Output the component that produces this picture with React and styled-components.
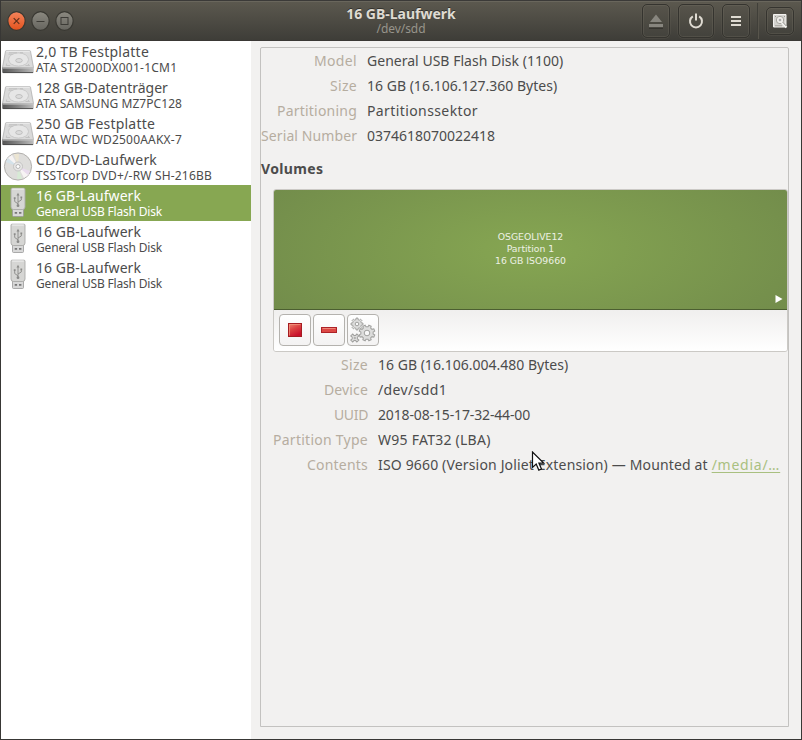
import React from "react";
import styled, { createGlobalStyle, css } from "styled-components";

const GlobalStyle = createGlobalStyle`
  * { box-sizing: border-box; }
  body { margin: 0; font-family: "Noto Sans", "Open Sans", sans-serif; color: #4c4c4c; }
`;

const Window = styled.div`
  position: relative;
  display: flex;
  flex-direction: column;
  width: 802px;
  height: 740px;
  overflow: hidden;
  background: #f2f1f0;
  border: solid #383735;
  border-width: 0 1px 1px;
`;

const HeaderBar = styled.header`
  display: grid;
  grid-template-columns: 1fr auto 1fr;
  align-items: center;
  height: 41px;
  flex: none;
  background: linear-gradient(#5c594f, #3e3d38);
  border-top: 1px solid #3b3a38;
  border-bottom: 1px solid #3a3835;
  box-shadow: inset 0 1px #69665c;
`;

const WindowControls = styled.div`
  display: flex;
  gap: 5px;
  padding: 1px 0 0 6px;
`;

const ControlSvg = styled.svg`
  display: block;
  width: 19px;
  height: 20px;
`;

const Titles = styled.div`
  display: flex;
  flex-direction: column;
  align-items: center;
`;

const Title = styled.div`
  font-size: 14px;
  font-weight: 700;
  line-height: 17px;
  color: #dfdbd2;
  text-shadow: 0 -1px #33322e;
  white-space: nowrap;
`;

const Subtitle = styled.div`
  font-size: 12px;
  line-height: 14px;
  color: #97948b;
  letter-spacing: -0.05px;
`;

const HeaderActions = styled.div`
  display: flex;
  justify-content: flex-end;
  align-items: center;
  padding: 1px 7px 0 0;
`;

const HeaderButton = styled.button`
  display: flex;
  align-items: center;
  justify-content: center;
  width: ${(p) => p.$w}px;
  height: ${(p) => p.$h || 34}px;
  margin-left: ${(p) => p.$gap || 0}px;
  padding: 0;
  border: 1px solid #35342f;
  border-radius: 5px;
  background: linear-gradient(#57544b, #43423c);
  box-shadow: inset 0 0 0 1px rgba(130, 126, 112, 0.22), 0 0 0 0.5px rgba(110, 106, 95, 0.4);
`;

const HeaderDivider = styled.div`
  width: 2px;
  height: 36px;
  margin-left: 7px;
  background: #403f39;
  border-right: 1px solid #58554c;
`;

const Body = styled.main`
  display: flex;
  flex: 1;
  min-height: 0;
`;

const Sidebar = styled.nav`
  width: 250px;
  flex: none;
  background: #fff;
`;

const DriveRow = styled.div`
  display: flex;
  height: 36px;
  padding-left: 1px;
  align-items: center;
  ${(p) => p.$selected && css`
    background: #87a752;
    color: #fff;
  `}
`;

const DriveIcon = styled.svg`
  display: block;
  width: 32px;
  height: 32px;
  flex: none;
`;

const DriveTexts = styled.div`
  padding: 0 0 1px 2px;
  white-space: nowrap;
`;

const DriveName = styled.div`
  font-size: 14px;
  line-height: 18px;
  letter-spacing: ${(p) => p.$track || 0}px;
`;

const DriveModel = styled.div`
  font-size: 12px;
  line-height: 14px;
  letter-spacing: ${(p) => p.$track || 0}px;
`;

const DetailFrame = styled.section`
  width: 529px;
  height: 680px;
  margin: 6px 0 0 9px;
  border: 1px solid #c3c2c0;
  border-radius: 2px 2px 0 0;
`;

const PropertyGrid = styled.dl`
  display: grid;
  grid-template-columns: ${(p) => p.$label}px 1fr;
  column-gap: 10px;
  grid-auto-rows: 25px;
  margin: 0 0 0 ${(p) => p.$indent || 0}px;
  font-size: 14px;
  line-height: 25px;
  white-space: nowrap;
`;

const PropertyLabel = styled.dt`
  color: #b6ada0;
  text-align: right;
  letter-spacing: ${(p) => p.$track || 0}px;
`;

const PropertyValue = styled.dd`
  margin: 0;
  letter-spacing: ${(p) => p.$track || 0}px;
`;

const MountLink = styled.a`
  color: #a9c080;
  letter-spacing: 0.75px;
  text-decoration: underline;
  text-underline-offset: 2px;
`;

const SectionTitle = styled.h2`
  margin: 0;
  height: 41px;
  font-size: 14px;
  line-height: 41px;
  letter-spacing: 0.35px;
`;

const VolumePanel = styled.div`
  width: 515px;
  height: 163px;
  margin-left: 12px;
  border: 1px solid #cbc9c5;
  border-radius: 3px;
  overflow: hidden;
`;

const VolumeMap = styled.div`
  display: grid;
  place-items: center;
  position: relative;
  height: 120px;
  padding-bottom: 2px;
  border-bottom: 1px solid #4c5f31;
  background: radial-gradient(ellipse 60% 100% at 50% 50%, #86a652, #728c4b);
  color: #edf1e4;
  font: 9.3px/12px "DejaVu Sans", sans-serif;
  text-align: center;
`;

const ActiveMark = styled.svg`
  position: absolute;
  right: 4px;
  bottom: 5px;
  width: 8px;
  height: 10px;
`;

const VolumeToolbar = styled.div`
  display: flex;
  gap: 2px;
  height: 41px;
  padding: 4px 5px;
  background: linear-gradient(#f0efee, #fff);
`;

const ToolButton = styled.button`
  display: flex;
  align-items: center;
  justify-content: center;
  width: 32px;
  height: 32px;
  padding: 0;
  border: 1px solid #b4b2ae;
  border-radius: 4px;
  background: linear-gradient(#fff, #f3f2f2);
`;

const Pointer = styled.svg`
  position: absolute;
  left: 530px;
  top: 451px;
  width: 14px;
  height: 21px;
`;

function Control({ kind }) {
  const close = kind === "close";
  return (
    <ControlSvg viewBox="0 0 19 20">
      <defs>
        <linearGradient id={"ctl-" + kind} x1="0" y1="0" x2="0" y2="1">
          <stop offset="0" stopColor={close ? "#f4845c" : "#8b8980"} />
          <stop offset="1" stopColor={close ? "#e2521d" : "#66655f"} />
        </linearGradient>
      </defs>
      <ellipse cx="9.5" cy="10" rx="8.7" ry="9.3" fill={`url(#ctl-${kind})`} stroke="#393832" strokeWidth="1.2" />
      <g fill="none" stroke={close ? "#61301b" : "#3c3b36"}>
        {close && <path d="M6.7 7.2l5.6 5.6M12.3 7.2L6.7 12.8" strokeWidth="1.2" />}
        {kind === "min" && <path d="M5.5 10.5h8" />}
        {kind === "max" && <rect x="6" y="6.5" width="7" height="7" />}
      </g>
    </ControlSvg>
  );
}

function HardDisk() {
  return (
    <DriveIcon viewBox="0 0 32 32">
      <defs>
        <linearGradient id="disk-side" x1="0" y1="0" x2="1" y2="0">
          <stop offset="0" stopColor="#555" />
          <stop offset="0.5" stopColor="#858585" />
          <stop offset="1" stopColor="#bdbdbd" />
        </linearGradient>
      </defs>
      <path d="M4.500 7.500h23q.8 0 1 .8L31.500 24.500H.5L3.500 8.300q.2-.8 1-.8z" fill="#dadada" stroke="#b0b0b0" strokeWidth=".8" />
      <path d="M.3 24.500h31.400v4.700q0 .8-.8.8H1.100q-.8 0-.8-.8z" fill="url(#disk-side)" />
      <path d="M.8 25h30.400" stroke="#c9c9c9" />
      <path d="M1 29.600h30" stroke="#484848" strokeWidth=".9" />
      <ellipse cx="16.500" cy="16.500" rx="10" ry="6.600" fill="#e6e6e6" stroke="#c2c2c2" strokeWidth=".8" />
      <ellipse cx="17" cy="17.500" rx="3.300" ry="2" fill="#dcdcdc" stroke="#b2b2b2" strokeWidth=".7" />
      <path d="M7 9.700h8M6.500 11.200h4M18 9.700h3M4.700 20.500l-.5 2h4M26 21l1.500 1.500h-4" stroke="#bbb" fill="none" strokeWidth=".8" />
      <path d="M4.500 8.200h23" stroke="#efefef" />
    </DriveIcon>
  );
}

function OpticalDisc() {
  return (
    <DriveIcon viewBox="0 0 32 32">
      <circle cx="16" cy="15.5" r="13.6" fill="#dedddb" stroke="#aaa8a5" strokeWidth=".9" />
      <path d="M16 15.5L5 8A13 13 0 0 1 10 4zM16 15.5l11 7.5a13 13 0 0 1-5 4z" fill="#f7f4f4" />
      <path d="M16 15.5L4 11l2-4z" fill="#d4e2ea" />
      <path d="M16 15.5l12 4.5-2 4z" fill="#e9dced" />
      <path d="M16 15.5L12 3h5z" fill="#ece5d2" />
      <path d="M16 15.5l4 12.5h-5z" fill="#d7ead5" />
      <circle cx="16" cy="15.5" r="4.5" fill="#e8e7e6" stroke="#bbb" strokeWidth=".8" />
      <circle cx="16" cy="15.5" r="2" fill="#fff" stroke="#aaa" strokeWidth=".8" />
    </DriveIcon>
  );
}

function UsbStick() {
  return (
    <DriveIcon viewBox="0 0 32 32">
      <path d="M10.500 22h11v6.500q0 1-1 1h-9q-1 0-1-1z" fill="#d8d8d8" stroke="#999" strokeWidth=".8" />
      <path d="M12.700 24.900h2.400v1.800h-2.400zM17 24.900h2.400v1.800H17z" fill="#777" />
      <path d="M10 1.200h12q1 0 1 1V20q0 2.500-2.500 2.500h-9Q9 22.500 9 20V2.200q0-1 1-1z" fill="#d6d6d4" stroke="#aaaaa8" strokeWidth=".9" />
      <path d="M10.200 2h11.600" stroke="#f4f4f4" />
      <g fill="none" stroke="#8a8a88" strokeWidth=".9">
        <path d="M16 8v11M16 16.800l-3.300-2.300v-2.500M16 15l3.300-2v-2.300" />
      </g>
      <path d="M16 5.700l1.500 2.700h-3zM11.800 10.300h1.800v1.800h-1.800zM18.400 9.500h1.800v1.800h-1.800z" fill="#8a8a88" />
      <circle cx="16" cy="18.700" r="1.400" fill="#8a8a88" />
    </DriveIcon>
  );
}

const icons = { disk: HardDisk, disc: OpticalDisc, usb: UsbStick };

const drives = [
  { icon: "disk", name: "2,0 TB Festplatte", nt: 0.24, model: "ATA ST2000DX001-1CM1", mt: 0.25 },
  { icon: "disk", name: "128 GB-Datenträger", nt: 0, model: "ATA SAMSUNG MZ7PC128", mt: 0.05 },
  { icon: "disk", name: "250 GB Festplatte", nt: 0.2, model: "ATA WDC WD2500AAKX-7", mt: 0.2 },
  { icon: "disc", name: "CD/DVD-Laufwerk", nt: 0.18, model: "TSSTcorp DVD+/-RW SH-216BB", mt: 0.18 },
  { icon: "usb", name: "16 GB-Laufwerk", nt: 0.05, model: "General USB Flash Disk", mt: -0.18, selected: true },
  { icon: "usb", name: "16 GB-Laufwerk", nt: 0.05, model: "General USB Flash Disk", mt: -0.18 },
  { icon: "usb", name: "16 GB-Laufwerk", nt: 0.05, model: "General USB Flash Disk", mt: -0.18 },
];

const driveProps = [
  ["Model", 0.34, "General USB Flash Disk (1100)", 0.02],
  ["Size", 0.31, "16 GB (16.106.127.360 Bytes)", 0.01],
  ["Partitioning", 0.21, "Partitionssektor", 0.4],
  ["Serial Number", 0.1, "0374618070022418", 0],
];

const volumeProps = [
  ["Size", 0.31, "16 GB (16.106.004.480 Bytes)", 0.01],
  ["Device", 0.14, "/dev/sdd1", 0.37],
  ["UUID", -0.36, "2018-08-15-17-32-44-00", -0.14],
  ["Partition Type", 0.26, "W95 FAT32 (LBA)", 0.25],
  ["Contents", 0.21, <>ISO 9660 (Version Joliet Extension) — Mounted at <MountLink>/media/…</MountLink></>, 0.16],
];

function Properties({ rows, label, indent }) {
  return (
    <PropertyGrid $label={label} $indent={indent}>
      {rows.map(([name, nameTrack, value, valueTrack]) => (
        <React.Fragment key={name}>
          <PropertyLabel $track={nameTrack}>{name}</PropertyLabel>
          <PropertyValue $track={valueTrack}>{value}</PropertyValue>
        </React.Fragment>
      ))}
    </PropertyGrid>
  );
}

function gearPath(cx, cy, outer, inner, teeth) {
  const points = [];
  const step = (Math.PI * 2) / teeth;
  for (let i = 0; i < teeth; i++) {
    [[-0.3, inner], [-0.2, outer], [0.2, outer], [0.3, inner]].forEach(([offset, r]) => {
      const a = (i + offset) * step;
      points.push(`${(cx + r * Math.cos(a)).toFixed(2)} ${(cy + r * Math.sin(a)).toFixed(2)}`);
    });
  }
  return `M${points.join("L")}Z`;
}

function Gears() {
  return (
    <svg width="26" height="26" viewBox="0 0 26 26">
      <g fill="#dddddc" stroke="#a0a09e" strokeWidth="1">
        <path d={gearPath(7, 7, 6, 4.5, 8)} />
        <path d={gearPath(17, 16, 8, 6.2, 8)} transform="rotate(22.5 17 16)" />
        <path d={gearPath(4.8, 21, 4.6, 2.7, 4)} transform="rotate(45 4.8 21)" />
      </g>
      <g fill="#f8f8f8" stroke="#a0a09e">
        <circle cx="7" cy="7" r="1.8" />
        <circle cx="17" cy="16" r="2.8" />
        <circle cx="4.8" cy="21" r=".7" />
      </g>
    </svg>
  );
}

export default function App() {
  return (
    <Window>
      <GlobalStyle />
      <HeaderBar>
        <WindowControls>
          <Control kind="close" />
          <Control kind="min" />
          <Control kind="max" />
        </WindowControls>
        <Titles>
          <Title>16 GB-Laufwerk</Title>
          <Subtitle>/dev/sdd</Subtitle>
        </Titles>
        <HeaderActions>
          <HeaderButton $w={28} aria-label="Eject">
            <svg width="16" height="16" viewBox="0 0 16 16" fill="#88867f">
              <path d="M8 1.500L14 9H2z" />
              <path d="M1 11h14v3H1z" />
              <path d="M1 15.500h14" stroke="#35342f" />
            </svg>
          </HeaderButton>
          <HeaderButton $w={36} $gap={8} aria-label="Power off">
            <svg width="16" height="16" viewBox="0 0 16 16" fill="none" stroke="#dfdbd2" strokeWidth="2">
              <path d="M4.800 3.300a6 6 0 1 0 6.400 0M8 0.500v7" />
            </svg>
          </HeaderButton>
          <HeaderButton $w={28} $gap={8} aria-label="Menu">
            <svg width="12" height="12" viewBox="0 0 12 12" fill="#dfdbd2">
              <path d="M1 1h10v2H1zM1 5h10v2H1zM1 9h10v2H1z" />
            </svg>
          </HeaderButton>
          <HeaderDivider />
          <HeaderButton $w={28} $h={28} $gap={7} aria-label="Disks">
            <svg width="16" height="16" viewBox="0 0 16 16">
              <path d="M1.500 1.500h12.500v12.500H1.500z" fill="#d5d4d0" stroke="#f4f3ef" />
              <path d="M3 12.800h7" stroke="#a09e97" />
              <circle cx="8" cy="7" r="3.700" fill="#efeeea" stroke="#a5a39c" />
              <circle cx="8" cy="7" r="1.300" fill="#aaa" />
              <path d="M3 3h1v1H3zM12 3h1v1h-1z" fill="#99978f" />
              <path d="M9.500 9l5 5.500" stroke="#f5f4f1" strokeWidth="2" />
              <path d="M10.500 9l4 4.200" stroke="#66645f" strokeWidth=".7" />
            </svg>
          </HeaderButton>
        </HeaderActions>
      </HeaderBar>
      <Body>
        <Sidebar>
          {drives.map((d, i) => {
            const Icon = icons[d.icon];
            return (
              <DriveRow key={i} $selected={d.selected}>
                <Icon />
                <DriveTexts>
                  <DriveName $track={d.nt}>{d.name}</DriveName>
                  <DriveModel $track={d.mt}>{d.model}</DriveModel>
                </DriveTexts>
              </DriveRow>
            );
          })}
        </Sidebar>
        <DetailFrame>
          <Properties rows={driveProps} label={96} />
          <SectionTitle>Volumes</SectionTitle>
          <VolumePanel>
            <VolumeMap>
              <div>
                <div>OSGEOLIVE12</div>
                <div>Partition 1</div>
                <div>16 GB ISO9660</div>
              </div>
              <ActiveMark viewBox="0 0 8 10">
                <path d="M0.500 1v8L7.500 5z" fill="#fff" />
              </ActiveMark>
            </VolumeMap>
            <VolumeToolbar>
              <ToolButton aria-label="Unmount">
                <svg width="14" height="14" viewBox="0 0 14 14">
                  <defs>
                    <linearGradient id="stop-red" x1="0" y1="0" x2="0.5" y2="1">
                      <stop offset="0" stopColor="#ef8872" />
                      <stop offset="0.500" stopColor="#db4141" />
                      <stop offset="1" stopColor="#c8102c" />
                    </linearGradient>
                  </defs>
                  <rect x=".5" y=".5" width="13" height="13" fill="url(#stop-red)" stroke="#a51c22" />
                  <path d="M1.500 12.500v-11h11" fill="none" stroke="#f49a82" strokeOpacity=".7" />
                </svg>
              </ToolButton>
              <ToolButton aria-label="Delete partition">
                <svg width="16" height="6" viewBox="0 0 16 6">
                  <rect x=".5" y=".5" width="15" height="5" fill="#dc4845" stroke="#ad2228" />
                  <path d="M1.500 1.500h13" stroke="#ee8576" />
                </svg>
              </ToolButton>
              <ToolButton aria-label="More actions">
                <Gears />
              </ToolButton>
            </VolumeToolbar>
          </VolumePanel>
          <Properties rows={volumeProps} label={95} indent={12} />
        </DetailFrame>
      </Body>
      <Pointer viewBox="0 0 14 21">
        <path d="M1.500 1v15.500l3.700-3.400 2.600 6 2.700-1.100-2.600-5.800h5z" fill="#fff" stroke="#111" strokeWidth="1.200" />
      </Pointer>
    </Window>
  );
}
